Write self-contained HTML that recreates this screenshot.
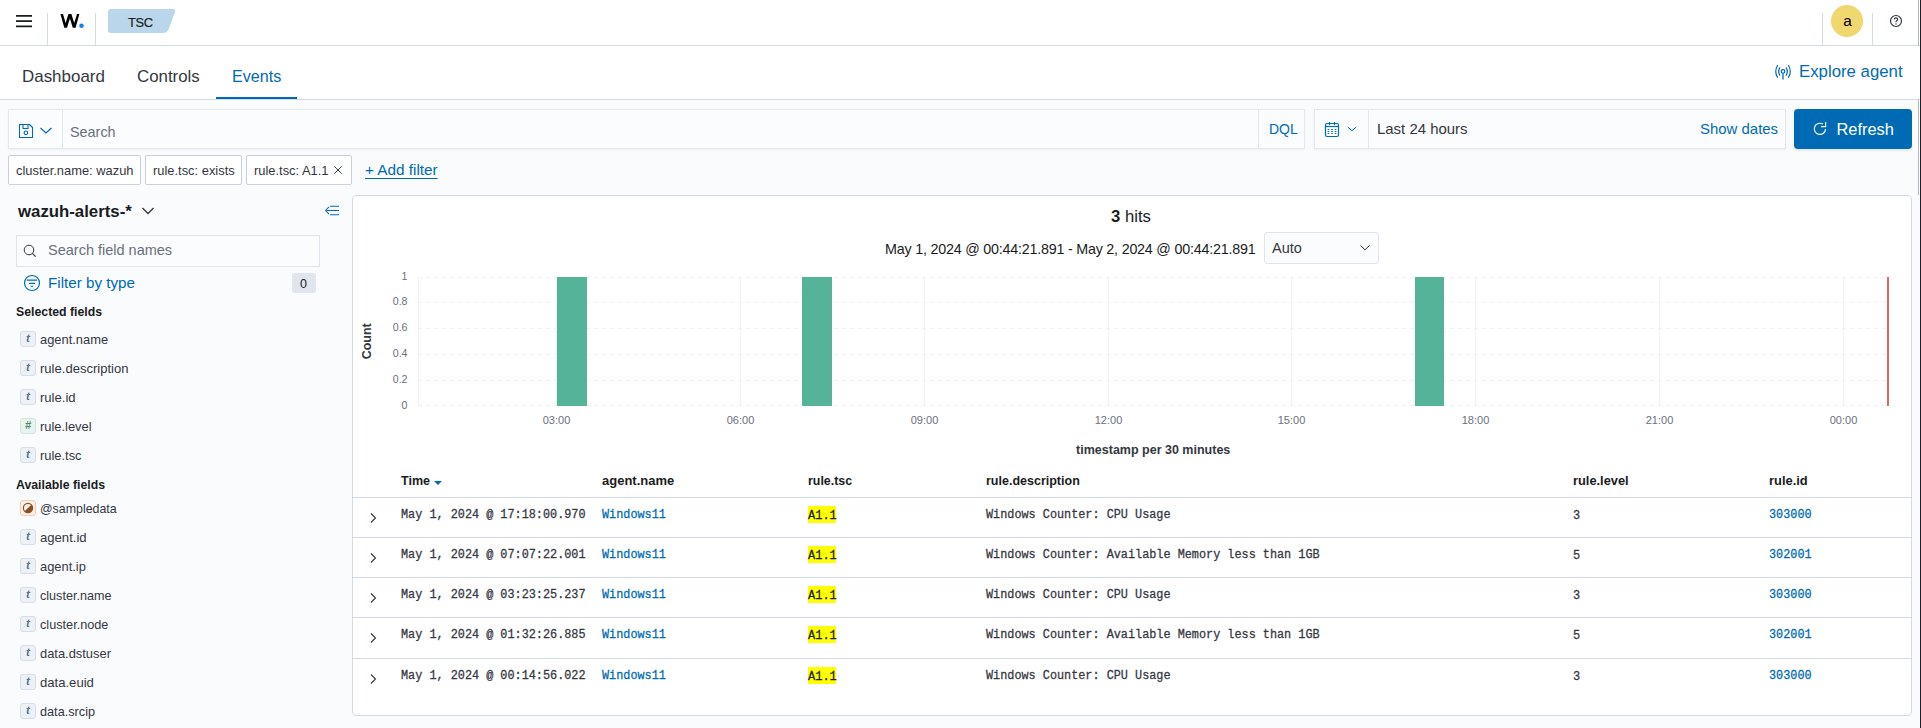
<!DOCTYPE html>
<html>
<head>
<meta charset="utf-8">
<style>
html,body{margin:0;padding:0;}
body{width:1921px;height:728px;overflow:hidden;position:relative;background:#fafbfd;font-family:"Liberation Sans",sans-serif;color:#343741;}
.a{position:absolute;}
.t{position:absolute;white-space:nowrap;line-height:1;}
.m{font-family:"Liberation Mono",monospace;transform:scaleY(1.12);transform-origin:0 9.07px;-webkit-text-stroke:0.25px currentColor;}
.b{font-weight:bold;}
.pri{color:#006bb4;}
</style>
</head>
<body>
<!-- HEADER -->
<div class="a" style="left:0;top:0;width:1921px;height:45px;background:#fff;"></div>
<div class="a" style="left:0;top:45px;width:1921px;height:1px;background:#d3dae6;"></div>
<!-- hamburger -->
<svg class="a" style="left:0;top:0;" width="45" height="45" viewBox="0 0 45 45"><path d="M16 15.9 H32 M16 21.2 H32 M16 26.4 H32" stroke="#1a1c21" stroke-width="1.7"/></svg>
<div class="a" style="left:47px;top:13px;width:1px;height:32px;background:#d3dae6;"></div>
<!-- logo -->
<svg class="a" style="left:0;top:0;" width="100" height="45" viewBox="0 0 100 45"><path d="M60.4 13.9 L63 13.9 L65.67 23.1 L68.4 13.9 L71.4 13.9 L74.2 23.1 L77 13.9 L79.4 13.9 L75.6 27.8 L72.8 27.8 L69.9 18.6 L67 27.8 L64.3 27.8 Z" fill="#000"/><circle cx="81.5" cy="25.7" r="2.3" fill="#1a7cf5"/></svg>
<div class="a" style="left:95px;top:13px;width:1px;height:32px;background:#d3dae6;"></div>
<!-- TSC badge -->
<svg class="a" style="left:107px;top:9px;" width="70" height="25" viewBox="0 0 70 25"><path d="M4 0 H65.5 Q69 0 68 3 L61.3 21 Q59.8 24 56 24 H4 Q1 24 1 21 V3 Q1 0 4 0 Z" fill="#b9d6ea"/></svg>
<div class="t" style="left:128px;top:17px;font-size:12.9px;letter-spacing:-0.4px;color:#1a1c21;-webkit-text-stroke:0.2px #1a1c21;">TSC</div>
<!-- right header -->
<div class="a" style="left:1822px;top:13px;width:1px;height:32px;background:#d3dae6;"></div>
<div class="a" style="left:1831px;top:5px;width:32px;height:32px;border-radius:50%;background:#f0d76e;"></div>
<div class="t" style="left:1843.3px;top:13px;font-size:15.3px;color:#000;">a</div>
<div class="a" style="left:1872px;top:13px;width:1px;height:32px;background:#d3dae6;"></div>
<svg class="a" style="left:1889px;top:14px;" width="14" height="14" viewBox="0 0 14 14"><circle cx="7" cy="7" r="5.5" fill="none" stroke="#343741" stroke-width="1.2"/><path d="M5.3 5.6 Q5.3 3.9 7 3.9 Q8.7 3.9 8.7 5.4 Q8.7 6.3 7.6 6.8 Q7 7.1 7 8.3" fill="none" stroke="#343741" stroke-width="1.15"/><circle cx="7" cy="9.9" r="0.7" fill="#343741"/></svg>
<div class="a" style="left:1918px;top:0;width:1px;height:195px;background:#b4b8bf;"></div>
<div class="a" style="left:1920px;top:0;width:1px;height:728px;background:#1d1e2a;"></div>

<!-- TAB BAR -->
<div class="a" style="left:0;top:46px;width:1920px;height:53px;background:#fff;"></div>
<div class="a" style="left:0;top:99px;width:1918px;height:1px;background:#d3dae6;"></div>
<div class="t" style="left:22px;top:68.5px;font-size:16.95px;color:#343741;">Dashboard</div>
<div class="t" style="left:137px;top:68.5px;font-size:16.85px;color:#343741;">Controls</div>
<div class="t" style="left:232px;top:68.3px;font-size:16.1px;color:#006bb4;">Events</div>
<div class="a" style="left:216px;top:97px;width:81px;height:2px;background:#006bb4;"></div>
<svg class="a" style="left:1773px;top:63px;" width="20" height="18" viewBox="0 0 20 18"><path d="M4.5 2.5 Q1 8.4 4.5 14.3 M15.5 2.5 Q19 8.4 15.5 14.3 M6.8 4.8 Q4.6 8.5 6.8 12.2 M13.2 4.8 Q15.4 8.5 13.2 12.2" fill="none" stroke="#006bb4" stroke-width="1.2" stroke-linecap="round"/><circle cx="10" cy="8.4" r="1.8" fill="none" stroke="#006bb4" stroke-width="1.2"/><path d="M10 10.2 V16.5" stroke="#006bb4" stroke-width="1.3"/></svg>
<div class="t pri" style="left:1799px;top:64px;font-size:16.8px;">Explore agent</div>


<!-- QUERY BAR -->
<div class="a" style="left:8px;top:109px;width:1295px;height:38px;background:#fbfcfd;border:1px solid #e3e8f0;box-shadow:0 1px 2px rgba(0,0,0,0.05);"></div>
<div class="a" style="left:62px;top:110px;width:1px;height:38px;background:#e3e8f0;"></div>
<svg class="a" style="left:18px;top:123px;" width="16" height="16" viewBox="0 0 16 16"><path d="M1.5 1.5 H11.5 L14.5 4.5 V14.5 H1.5 Z" fill="none" stroke="#006bb4" stroke-width="1.1" stroke-linejoin="round"/><path d="M5 1.5 V5.4 H10 V1.5" fill="none" stroke="#006bb4" stroke-width="1.05"/><circle cx="7.9" cy="9.8" r="1.8" fill="none" stroke="#006bb4" stroke-width="1.05"/></svg>
<svg class="a" style="left:39px;top:126px;" width="14" height="9" viewBox="0 0 14 9"><path d="M1.5 2 L7 7 L12.5 2" fill="none" stroke="#006bb4" stroke-width="1.2"/></svg>
<div class="t" style="left:70px;top:124.5px;font-size:14.4px;color:#69707d;">Search</div>
<div class="a" style="left:1258px;top:110px;width:1px;height:38px;background:#e3e8f0;"></div>
<div class="t pri" style="left:1269px;top:122px;font-size:14px;">DQL</div>

<!-- DATE PICKER -->
<div class="a" style="left:1314px;top:109px;width:470px;height:38px;background:#fbfcfd;border:1px solid #e3e8f0;box-shadow:0 1px 2px rgba(0,0,0,0.05);"></div>
<div class="a" style="left:1368px;top:110px;width:1px;height:38px;background:#e3e8f0;"></div>
<svg class="a" style="left:1324px;top:121px;" width="16" height="17" viewBox="0 0 16 17"><rect x="1.5" y="2.5" width="13" height="13" rx="1.5" fill="none" stroke="#006bb4" stroke-width="1.2"/><path d="M1.5 5.5 H14.5" stroke="#006bb4" stroke-width="1.2"/><path d="M5.5 1 V4 M10.5 1 V4" stroke="#006bb4" stroke-width="1.2"/><path d="M3.7 8.5h1.6M7.2 8.5h1.6M10.7 8.5h1.6M3.7 10.5h1.6M7.2 10.5h1.6M10.7 10.5h1.6M3.7 12.5h1.6M7.2 12.5h1.6M10.7 12.5h1.6" stroke="#006bb4" stroke-width="1"/></svg>
<svg class="a" style="left:1346px;top:125px;" width="12" height="8" viewBox="0 0 12 8"><path d="M1.8 2 L6 5.8 L10.2 2" fill="none" stroke="#006bb4" stroke-width="1"/></svg>
<div class="t" style="left:1377px;top:122px;font-size:14.95px;color:#343741;">Last 24 hours</div>
<div class="t pri" style="left:1700px;top:122px;font-size:14.95px;">Show dates</div>

<!-- REFRESH -->
<div class="a" style="left:1794px;top:109px;width:118px;height:40px;background:#006bb4;border-radius:4px;box-shadow:0 2px 2px rgba(0,0,0,0.08);"></div>
<svg class="a" style="left:1812px;top:120px;" width="16" height="17" viewBox="0 0 16 17"><path d="M13.5 8.9 A5.6 5.6 0 1 1 10.9 4.1" fill="none" stroke="#fff" stroke-width="1.15"/><path d="M9 6.6 H13.6 V2" fill="none" stroke="#fff" stroke-width="1.15"/></svg>
<div class="t" style="left:1836.5px;top:121px;font-size:16.4px;color:#fff;">Refresh</div>

<!-- FILTER PILLS -->
<div class="a" style="left:8px;top:155px;width:131px;height:28px;background:#fff;border:1px solid #c9d0dc;border-radius:2px;"></div>
<div class="t" style="left:16px;top:165px;font-size:12.9px;color:#343741;">cluster.name: wazuh</div>
<div class="a" style="left:145px;top:155px;width:95px;height:28px;background:#fff;border:1px solid #c9d0dc;border-radius:2px;"></div>
<div class="t" style="left:153px;top:165px;font-size:12.9px;color:#343741;">rule.tsc: exists</div>
<div class="a" style="left:246px;top:155px;width:104px;height:28px;background:#fff;border:1px solid #c9d0dc;border-radius:2px;"></div>
<div class="t" style="left:254px;top:165px;font-size:12.9px;color:#343741;">rule.tsc: A1.1</div>
<svg class="a" style="left:333px;top:165px;" width="10" height="10" viewBox="0 0 10 10"><path d="M1.3 1.3 L8.7 8.7 M8.7 1.3 L1.3 8.7" stroke="#343741" stroke-width="0.95"/></svg>
<div class="t pri" style="left:365px;top:162px;font-size:15.3px;text-decoration:underline;text-underline-offset:2.5px;">+ Add filter</div>


<!-- SIDEBAR -->
<div class="t b" style="left:18px;top:204px;font-size:16.8px;color:#1a1c21;">wazuh-alerts-*</div>
<svg class="a" style="left:141px;top:206px;" width="14" height="10" viewBox="0 0 14 10"><path d="M1.5 2 L7 7.5 L12.5 2" fill="none" stroke="#343741" stroke-width="1.3"/></svg>
<svg class="a" style="left:324px;top:204px;" width="16" height="13" viewBox="0 0 16 13"><path d="M6 2.2 H15 M2.5 6.5 H15 M6 10.8 H15" stroke="#006bb4" stroke-width="1.05"/><path d="M5 2.8 L1.6 6.5 L5 10.2" fill="none" stroke="#006bb4" stroke-width="1.05"/></svg>
<div class="a" style="left:16px;top:235px;width:302px;height:30px;background:#fbfcfd;border:1px solid #dfe5ef;"></div>
<svg class="a" style="left:23px;top:244px;" width="14" height="14" viewBox="0 0 14 14"><circle cx="6" cy="6" r="4.8" fill="none" stroke="#343741" stroke-width="1"/><path d="M9.4 9.4 L12.6 12.6" stroke="#343741" stroke-width="1.1"/></svg>
<div class="t" style="left:48px;top:243px;font-size:14.5px;color:#69707d;">Search field names</div>
<svg class="a" style="left:23px;top:274px;" width="18" height="18" viewBox="0 0 18 18"><circle cx="9" cy="9" r="7.5" fill="none" stroke="#006bb4" stroke-width="1.2"/><path d="M3.8 6.1 H14.2 M6.1 9.4 H12.1 M7.7 12.3 H10.1" stroke="#006bb4" stroke-width="1.1"/></svg>
<div class="t pri" style="left:48px;top:274.6px;font-size:15.2px;">Filter by type</div>
<div class="a" style="left:292px;top:273px;width:24px;height:20px;background:#e0e5ee;border-radius:3px;"></div>
<div class="t" style="left:300px;top:278px;font-size:12.5px;color:#1a1c21;">0</div>
<div class="t b" style="left:16px;top:306px;font-size:12.3px;color:#1a1c21;">Selected fields</div>
<div class="t b" style="left:16px;top:479px;font-size:12.3px;color:#1a1c21;">Available fields</div>
<div class="a" style="left:20px;top:331px;width:14px;height:14px;background:#eef2f7;border:1px solid #d5deea;border-radius:3px;"></div><div class="t" style="left:20px;top:333px;width:16px;text-align:center;font-size:11.5px;font-style:italic;font-weight:bold;color:#587691;">t</div>
<div class="t" style="left:40px;top:334px;font-size:12.9px;color:#343741;">agent.name</div>
<div class="a" style="left:20px;top:360px;width:14px;height:14px;background:#eef2f7;border:1px solid #d5deea;border-radius:3px;"></div><div class="t" style="left:20px;top:362px;width:16px;text-align:center;font-size:11.5px;font-style:italic;font-weight:bold;color:#587691;">t</div>
<div class="t" style="left:40px;top:362.4px;font-size:13.05px;color:#343741;">rule.description</div>
<div class="a" style="left:20px;top:389px;width:14px;height:14px;background:#eef2f7;border:1px solid #d5deea;border-radius:3px;"></div><div class="t" style="left:20px;top:391px;width:16px;text-align:center;font-size:11.5px;font-style:italic;font-weight:bold;color:#587691;">t</div>
<div class="t" style="left:40px;top:391.4px;font-size:13.05px;color:#343741;">rule.id</div>
<div class="a" style="left:20px;top:418px;width:14px;height:14px;background:#e8f4ef;border:1px solid #cfe6dc;border-radius:3px;"></div><div class="t" style="left:20px;top:420px;width:16px;text-align:center;font-size:11px;font-style:italic;font-weight:bold;color:#4f8a6c;">#</div>
<div class="t" style="left:40px;top:421px;font-size:12.9px;color:#343741;">rule.level</div>
<div class="a" style="left:20px;top:447px;width:14px;height:14px;background:#eef2f7;border:1px solid #d5deea;border-radius:3px;"></div><div class="t" style="left:20px;top:449px;width:16px;text-align:center;font-size:11.5px;font-style:italic;font-weight:bold;color:#587691;">t</div>
<div class="t" style="left:40px;top:450px;font-size:12.9px;color:#343741;">rule.tsc</div>
<div class="a" style="left:20px;top:500px;width:14px;height:14px;background:#fdf0e8;border:1px solid #f5cdb5;border-radius:3px;"></div><svg class="a" style="left:21px;top:501px;" width="14" height="14" viewBox="0 0 14 14"><circle cx="7" cy="7" r="4.6" fill="none" stroke="#8a4f1f" stroke-width="1.2"/><path d="M10.3 3.7 A4.6 4.6 0 0 1 3.7 10.3 Z" fill="#8a4f1f"/></svg>
<div class="t" style="left:40px;top:503px;font-size:12.4px;color:#343741;">@sampledata</div>
<div class="a" style="left:20px;top:529px;width:14px;height:14px;background:#eef2f7;border:1px solid #d5deea;border-radius:3px;"></div><div class="t" style="left:20px;top:531px;width:16px;text-align:center;font-size:11.5px;font-style:italic;font-weight:bold;color:#587691;">t</div>
<div class="t" style="left:40px;top:531.4px;font-size:13.1px;color:#343741;">agent.id</div>
<div class="a" style="left:20px;top:558px;width:14px;height:14px;background:#eef2f7;border:1px solid #d5deea;border-radius:3px;"></div><div class="t" style="left:20px;top:560px;width:16px;text-align:center;font-size:11.5px;font-style:italic;font-weight:bold;color:#587691;">t</div>
<div class="t" style="left:40px;top:561px;font-size:12.9px;color:#343741;">agent.ip</div>
<div class="a" style="left:20px;top:587px;width:14px;height:14px;background:#eef2f7;border:1px solid #d5deea;border-radius:3px;"></div><div class="t" style="left:20px;top:589px;width:16px;text-align:center;font-size:11.5px;font-style:italic;font-weight:bold;color:#587691;">t</div>
<div class="t" style="left:40px;top:590px;font-size:12.6px;color:#343741;">cluster.name</div>
<div class="a" style="left:20px;top:616px;width:14px;height:14px;background:#eef2f7;border:1px solid #d5deea;border-radius:3px;"></div><div class="t" style="left:20px;top:618px;width:16px;text-align:center;font-size:11.5px;font-style:italic;font-weight:bold;color:#587691;">t</div>
<div class="t" style="left:40px;top:619px;font-size:12.7px;color:#343741;">cluster.node</div>
<div class="a" style="left:20px;top:645px;width:14px;height:14px;background:#eef2f7;border:1px solid #d5deea;border-radius:3px;"></div><div class="t" style="left:20px;top:647px;width:16px;text-align:center;font-size:11.5px;font-style:italic;font-weight:bold;color:#587691;">t</div>
<div class="t" style="left:40px;top:648px;font-size:12.9px;color:#343741;">data.dstuser</div>
<div class="a" style="left:20px;top:674px;width:14px;height:14px;background:#eef2f7;border:1px solid #d5deea;border-radius:3px;"></div><div class="t" style="left:20px;top:676px;width:16px;text-align:center;font-size:11.5px;font-style:italic;font-weight:bold;color:#587691;">t</div>
<div class="t" style="left:40px;top:676.4px;font-size:13.1px;color:#343741;">data.euid</div>
<div class="a" style="left:20px;top:703px;width:14px;height:14px;background:#eef2f7;border:1px solid #d5deea;border-radius:3px;"></div><div class="t" style="left:20px;top:705px;width:16px;text-align:center;font-size:11.5px;font-style:italic;font-weight:bold;color:#587691;">t</div>
<div class="t" style="left:40px;top:706px;font-size:12.7px;color:#343741;">data.srcip</div>


<!-- PANEL -->
<div class="a" style="left:352px;top:195px;width:1558px;height:519px;background:#fff;border:1px solid #d3dae6;border-radius:4px;"></div>
<div class="t" style="left:1111px;top:209px;font-size:16.7px;color:#1a1c21;"><b>3</b> hits</div>
<div class="t" style="left:885px;top:242px;font-size:14.3px;letter-spacing:-0.21px;color:#1a1c21;">May 1, 2024 @ 00:44:21.891 - May 2, 2024 @ 00:44:21.891</div>
<div class="a" style="left:1264px;top:232px;width:113px;height:30px;background:#fbfcfd;border:1px solid #dfe5ef;border-radius:3px;"></div>
<div class="t" style="left:1272px;top:241px;font-size:14.5px;color:#343741;">Auto</div>
<svg class="a" style="left:1359px;top:244px;" width="12" height="8" viewBox="0 0 12 8"><path d="M1.5 1.5 L6 5.8 L10.5 1.5" fill="none" stroke="#343741" stroke-width="1"/></svg>
<svg class="a" style="left:0;top:0;" width="1921" height="728" viewBox="0 0 1921 728">
<line x1="556.5" y1="277" x2="556.5" y2="406" stroke="#eef0f3" stroke-width="1"/>
<line x1="740.5" y1="277" x2="740.5" y2="406" stroke="#eef0f3" stroke-width="1"/>
<line x1="924.5" y1="277" x2="924.5" y2="406" stroke="#eef0f3" stroke-width="1"/>
<line x1="1108.5" y1="277" x2="1108.5" y2="406" stroke="#eef0f3" stroke-width="1"/>
<line x1="1291.5" y1="277" x2="1291.5" y2="406" stroke="#eef0f3" stroke-width="1"/>
<line x1="1475.5" y1="277" x2="1475.5" y2="406" stroke="#eef0f3" stroke-width="1"/>
<line x1="1659.5" y1="277" x2="1659.5" y2="406" stroke="#eef0f3" stroke-width="1"/>
<line x1="1843.5" y1="277" x2="1843.5" y2="406" stroke="#eef0f3" stroke-width="1"/>
<line x1="418" y1="277.5" x2="1888" y2="277.5" stroke="#eef0f3" stroke-width="1" stroke-dasharray="4 4"/>
<line x1="418" y1="302.5" x2="1888" y2="302.5" stroke="#eef0f3" stroke-width="1" stroke-dasharray="4 4"/>
<line x1="418" y1="328.5" x2="1888" y2="328.5" stroke="#eef0f3" stroke-width="1" stroke-dasharray="4 4"/>
<line x1="418" y1="354.5" x2="1888" y2="354.5" stroke="#eef0f3" stroke-width="1" stroke-dasharray="4 4"/>
<line x1="418" y1="380.5" x2="1888" y2="380.5" stroke="#eef0f3" stroke-width="1" stroke-dasharray="4 4"/>
<line x1="418" y1="405.5" x2="1888" y2="405.5" stroke="#eef0f3" stroke-width="1" stroke-dasharray="4 4"/>
<line x1="418.5" y1="277" x2="418.5" y2="406" stroke="#eef0f3" stroke-width="1"/>
<rect x="557" y="277" width="30" height="129" fill="#54b399"/>
<rect x="802" y="277" width="30" height="129" fill="#54b399"/>
<rect x="1415" y="277" width="29" height="129" fill="#54b399"/>
<rect x="1887" y="277" width="2" height="129" fill="#dc6a63"/>
<text x="407.5" y="279.7" text-anchor="end" font-family="Liberation Sans" font-size="10.6" fill="#69707d">1</text>
<text x="407.5" y="304.6" text-anchor="end" font-family="Liberation Sans" font-size="10.6" fill="#69707d">0.8</text>
<text x="407.5" y="330.5" text-anchor="end" font-family="Liberation Sans" font-size="10.6" fill="#69707d">0.6</text>
<text x="407.5" y="356.5" text-anchor="end" font-family="Liberation Sans" font-size="10.6" fill="#69707d">0.4</text>
<text x="407.5" y="382.6" text-anchor="end" font-family="Liberation Sans" font-size="10.6" fill="#69707d">0.2</text>
<text x="407.5" y="408.6" text-anchor="end" font-family="Liberation Sans" font-size="10.6" fill="#69707d">0</text>
<text x="556.5" y="424" text-anchor="middle" font-family="Liberation Sans" font-size="11" fill="#69707d">03:00</text>
<text x="740.5" y="424" text-anchor="middle" font-family="Liberation Sans" font-size="11" fill="#69707d">06:00</text>
<text x="924.5" y="424" text-anchor="middle" font-family="Liberation Sans" font-size="11" fill="#69707d">09:00</text>
<text x="1108.5" y="424" text-anchor="middle" font-family="Liberation Sans" font-size="11" fill="#69707d">12:00</text>
<text x="1291.5" y="424" text-anchor="middle" font-family="Liberation Sans" font-size="11" fill="#69707d">15:00</text>
<text x="1475.5" y="424" text-anchor="middle" font-family="Liberation Sans" font-size="11" fill="#69707d">18:00</text>
<text x="1659.5" y="424" text-anchor="middle" font-family="Liberation Sans" font-size="11" fill="#69707d">21:00</text>
<text x="1843.5" y="424" text-anchor="middle" font-family="Liberation Sans" font-size="11" fill="#69707d">00:00</text>
<text x="0" y="0" transform="translate(371,341.3) rotate(-90)" text-anchor="middle" font-family="Liberation Sans" font-weight="bold" font-size="12.5" fill="#343741">Count</text>
<text x="1153.2" y="453.8" text-anchor="middle" font-family="Liberation Sans" font-weight="bold" font-size="12.5" fill="#343741">timestamp per 30 minutes</text>
</svg>
<div class="t b" style="left:401px;top:475px;font-size:12.5px;color:#1a1c21;">Time</div>
<svg class="a" style="left:434px;top:480px;" width="8" height="6" viewBox="0 0 8 6"><path d="M0 1 H8 L4 5 Z" fill="#006bb4"/></svg>
<div class="t b" style="left:602px;top:474.4px;font-size:13px;color:#1a1c21;">agent.name</div>
<div class="t b" style="left:808px;top:475px;font-size:12.4px;color:#1a1c21;">rule.tsc</div>
<div class="t b" style="left:986px;top:475px;font-size:12.5px;color:#1a1c21;">rule.description</div>
<div class="t b" style="left:1573px;top:474.7px;font-size:12.85px;color:#1a1c21;">rule.level</div>
<div class="t b" style="left:1769px;top:474.7px;font-size:12.9px;color:#1a1c21;">rule.id</div>
<div class="a" style="left:353px;top:497px;width:1558px;height:1px;background:#d3dae6;"></div>
<svg class="a" style="left:368px;top:512px;" width="10" height="12" viewBox="0 0 10 12"><path d="M3 1.5 L7.5 6 L3 10.5" fill="none" stroke="#343741" stroke-width="1.1"/></svg>
<div class="t m" style="left:401px;top:509.8px;font-size:11.83px;color:#343741;">May 1, 2024 @ 17:18:00.970</div>
<div class="t m pri" style="left:602px;top:509.8px;font-size:11.83px;">Windows11</div>
<div class="a" style="left:808px;top:506px;width:28px;height:17px;background:#ffff00;"></div>
<div class="t m" style="left:808px;top:509.8px;font-size:12px;color:#1a1c21;">A1.1</div>
<div class="t m" style="left:986px;top:509.8px;font-size:11.83px;color:#343741;">Windows Counter: CPU Usage</div>
<div class="t m" style="left:1573px;top:509.8px;font-size:12px;color:#343741;">3</div>
<div class="t m pri" style="left:1769px;top:509.8px;font-size:11.83px;">303000</div>
<div class="a" style="left:353px;top:537px;width:1558px;height:1px;background:#d3dae6;"></div>
<svg class="a" style="left:368px;top:552px;" width="10" height="12" viewBox="0 0 10 12"><path d="M3 1.5 L7.5 6 L3 10.5" fill="none" stroke="#343741" stroke-width="1.1"/></svg>
<div class="t m" style="left:401px;top:549.8px;font-size:11.83px;color:#343741;">May 1, 2024 @ 07:07:22.001</div>
<div class="t m pri" style="left:602px;top:549.8px;font-size:11.83px;">Windows11</div>
<div class="a" style="left:808px;top:546px;width:28px;height:17px;background:#ffff00;"></div>
<div class="t m" style="left:808px;top:549.8px;font-size:12px;color:#1a1c21;">A1.1</div>
<div class="t m" style="left:986px;top:549.8px;font-size:11.83px;color:#343741;">Windows Counter: Available Memory less than 1GB</div>
<div class="t m" style="left:1573px;top:549.8px;font-size:12px;color:#343741;">5</div>
<div class="t m pri" style="left:1769px;top:549.8px;font-size:11.83px;">302001</div>
<div class="a" style="left:353px;top:577px;width:1558px;height:1px;background:#d3dae6;"></div>
<svg class="a" style="left:368px;top:592px;" width="10" height="12" viewBox="0 0 10 12"><path d="M3 1.5 L7.5 6 L3 10.5" fill="none" stroke="#343741" stroke-width="1.1"/></svg>
<div class="t m" style="left:401px;top:589.8px;font-size:11.83px;color:#343741;">May 1, 2024 @ 03:23:25.237</div>
<div class="t m pri" style="left:602px;top:589.8px;font-size:11.83px;">Windows11</div>
<div class="a" style="left:808px;top:586px;width:28px;height:17px;background:#ffff00;"></div>
<div class="t m" style="left:808px;top:589.8px;font-size:12px;color:#1a1c21;">A1.1</div>
<div class="t m" style="left:986px;top:589.8px;font-size:11.83px;color:#343741;">Windows Counter: CPU Usage</div>
<div class="t m" style="left:1573px;top:589.8px;font-size:12px;color:#343741;">3</div>
<div class="t m pri" style="left:1769px;top:589.8px;font-size:11.83px;">303000</div>
<div class="a" style="left:353px;top:617px;width:1558px;height:1px;background:#d3dae6;"></div>
<svg class="a" style="left:368px;top:632px;" width="10" height="12" viewBox="0 0 10 12"><path d="M3 1.5 L7.5 6 L3 10.5" fill="none" stroke="#343741" stroke-width="1.1"/></svg>
<div class="t m" style="left:401px;top:629.8px;font-size:11.83px;color:#343741;">May 1, 2024 @ 01:32:26.885</div>
<div class="t m pri" style="left:602px;top:629.8px;font-size:11.83px;">Windows11</div>
<div class="a" style="left:808px;top:626px;width:28px;height:17px;background:#ffff00;"></div>
<div class="t m" style="left:808px;top:629.8px;font-size:12px;color:#1a1c21;">A1.1</div>
<div class="t m" style="left:986px;top:629.8px;font-size:11.83px;color:#343741;">Windows Counter: Available Memory less than 1GB</div>
<div class="t m" style="left:1573px;top:629.8px;font-size:12px;color:#343741;">5</div>
<div class="t m pri" style="left:1769px;top:629.8px;font-size:11.83px;">302001</div>
<div class="a" style="left:353px;top:658px;width:1558px;height:1px;background:#d3dae6;"></div>
<svg class="a" style="left:368px;top:673px;" width="10" height="12" viewBox="0 0 10 12"><path d="M3 1.5 L7.5 6 L3 10.5" fill="none" stroke="#343741" stroke-width="1.1"/></svg>
<div class="t m" style="left:401px;top:670.8px;font-size:11.83px;color:#343741;">May 1, 2024 @ 00:14:56.022</div>
<div class="t m pri" style="left:602px;top:670.8px;font-size:11.83px;">Windows11</div>
<div class="a" style="left:808px;top:667px;width:28px;height:17px;background:#ffff00;"></div>
<div class="t m" style="left:808px;top:670.8px;font-size:12px;color:#1a1c21;">A1.1</div>
<div class="t m" style="left:986px;top:670.8px;font-size:11.83px;color:#343741;">Windows Counter: CPU Usage</div>
<div class="t m" style="left:1573px;top:670.8px;font-size:12px;color:#343741;">3</div>
<div class="t m pri" style="left:1769px;top:670.8px;font-size:11.83px;">303000</div>

</body>
</html>
